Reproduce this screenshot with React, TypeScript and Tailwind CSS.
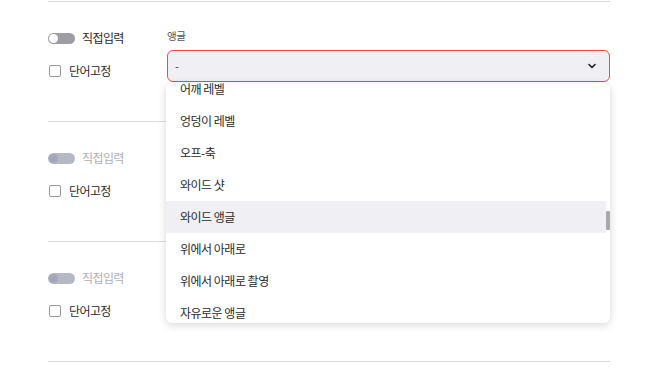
import { ChevronDown } from 'lucide-react';

const FONT = { fontFamily: '"Noto Sans CJK KR", "Noto Sans", sans-serif' };

const options = [
  '어깨 레벨',
  '엉덩이 레벨',
  '오프-축',
  '와이드 샷',
  '와이드 앵글',
  '위에서 아래로',
  '위에서 아래로 촬영',
  '자유로운 앵글',
];

function Toggle({ disabled }: { disabled?: boolean }) {
  return (
    <div
      className={
        disabled
          ? 'w-[27px] h-[11px] rounded-full bg-[#b6b8c6] flex items-center px-[1px]'
          : 'w-[27px] h-[11px] rounded-full bg-[#9d9da3] flex items-center px-[1px]'
      }
    >
      <div
        className={
          disabled
            ? 'w-[9px] h-[9px] rounded-full bg-[#a3a7ba]'
            : 'w-[9px] h-[9px] rounded-full bg-white'
        }
      />
    </div>
  );
}

function Section({ index }: { index: number }) {
  const disabled = index > 0;
  return (
    <div className="border-t border-[#dcdcdc] h-[120px] flex">
      <div className="w-[119px] pt-[28px]">
        <div className="h-[16px] flex items-center gap-[7px]">
          <Toggle disabled={disabled} />
          <span
            className={
              disabled
                ? 'text-[12px] tracking-[-0.6px] text-[#b0b0b4]'
                : 'text-[12px] tracking-[-0.6px] text-[#2a2a2a]'
            }
          >
            직접입력
          </span>
        </div>
        <div className="h-[16px] mt-[17px] flex items-center gap-[8px] pl-px">
          <div className="w-[12px] h-[12px] border border-[#9a9a9a] rounded-[2px] bg-white" />
          <span className="text-[12px] tracking-[-0.6px] text-[#2a2a2a]">단어고정</span>
        </div>
      </div>
      {index === 0 && (
        <div className="flex-1 pt-[27px] relative">
          <div className="h-[14px] flex items-center text-[10.5px] tracking-[-0.4px] text-[#555]">
            앵글
          </div>
          <div className="relative mt-[7px]">
            <div className="h-[32px] rounded-[6px] border border-[#f24848] bg-[#efeff4] flex items-center justify-between pl-[7px] pr-[11px]">
              <span className="text-[11px] text-[#333]">-</span>
              <ChevronDown size={12} strokeWidth={3.2} className="text-[#222]" />
            </div>
            <div className="absolute left-[-1px] right-0 top-[33px] h-[240px] z-10 bg-white rounded-[6px] shadow-[0_2px_8px_rgba(0,0,0,0.16)] overflow-hidden">
              <div className="-mt-[10px] mr-[4px]">
                {options.map((opt) => (
                  <div
                    key={opt}
                    className={
                      opt === '와이드 앵글'
                        ? 'h-[32px] flex items-center pl-[14px] text-[12px] tracking-[-0.5px] text-[#2a2a2a] bg-[#efeff4]'
                        : 'h-[32px] flex items-center pl-[14px] text-[12px] tracking-[-0.5px] text-[#2a2a2a]'
                    }
                  >
                    {opt}
                  </div>
                ))}
              </div>
              <div className="absolute right-0 top-[128px] w-[4px] h-[19px] bg-[#a9a9ad] rounded-[1px]" />
            </div>
          </div>
        </div>
      )}
    </div>
  );
}

export default function App() {
  return (
    <div className="w-[653px] h-[369px] bg-white overflow-hidden" style={FONT}>
      <div className="ml-[48px] w-[562px] pt-px">
        {[0, 1, 2].map((i) => (
          <Section key={i} index={i} />
        ))}
        <div className="border-t border-[#dcdcdc]" />
      </div>
    </div>
  );
}
